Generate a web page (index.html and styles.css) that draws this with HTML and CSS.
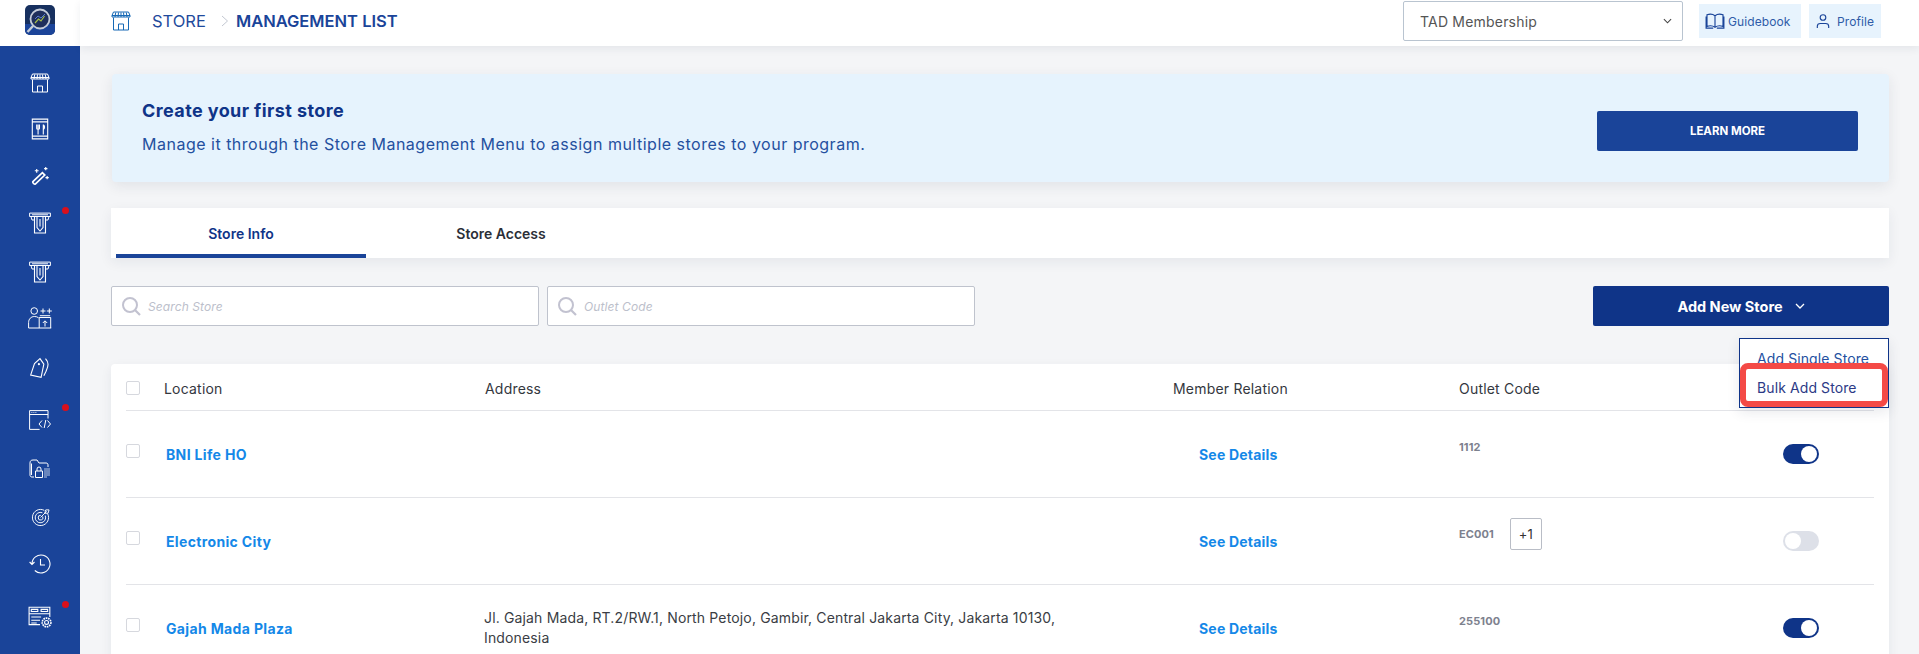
FILE: index.html
```html
<!DOCTYPE html>
<html lang="en">
<head>
<meta charset="utf-8">
<title>Store Management List</title>
<link rel="stylesheet" href="styles.css">
</head>
<body>
<svg class="defs" width="0" height="0" aria-hidden="true">
  <symbol id="i-store" viewBox="0 0 20 20"><path d="M2.500 1h15l1.500 3.500v1.500H1V4.500zM1 4.500h18M2.500 6.500V19h15V6.500M7.500 19v-6h5v6M7.500 1.500 7 6M12.500 1.500 13 6M10 1.500V6M4.700 1.500 4 6M15.300 1.500 16 6" fill="none" stroke="currentColor" stroke-width="1"/></symbol>
  <symbol id="i-menu" viewBox="0 0 20 20"><path d="M3 1h14v18H3zM3 3.500h14M3 16.500h14M7 6v3.500c0 1 2.500 1 2.500 0V6M8.250 6v9M13 6v9M13 6c1.500 1 1.500 3.500 0 4.500" fill="none" stroke="currentColor" stroke-width="1"/></symbol>
  <symbol id="i-wand" viewBox="0 0 20 20"><path d="M2 15.500 12 6l2.500 2.500L4.500 18c-.8.600-3.300-1.700-2.500-2.500z" fill="none" stroke="currentColor" stroke-width="1.800"/><path d="M6 2v4M4 4h4M15.500 0v3.500M13.800 1.700h3.500M17 9.500v3.500M15.200 11.200h3.500" stroke="currentColor" stroke-width="1.200" fill="none"/></symbol>
  <symbol id="i-atm" viewBox="0 0 22 21"><path d="M.6.600h20.800v3.400H.6zM2 4l1 3.500h2.500M20 4l-1 3.500h-2.500M3 2.300h16" fill="none" stroke="currentColor" stroke-width="1"/><path d="M5.500 4v16.500h11V4M8 4v11l3 3.500 3-3.500V4M11 6.500v7.500" fill="none" stroke="currentColor" stroke-width="1.100"/></symbol>
  <symbol id="i-user-add" viewBox="0 0 24 22"><circle cx="6.200" cy="4" r="3.300" fill="none" stroke="currentColor" stroke-width="1"/><path d="M.6 21v-5.500c0-3.500 2.500-6 5.800-6 1.700 0 3 .4 4.100 1.200M.6 21h22.600M11.200 21V10.500h11.500V21M11.800 8.700h10.400M17 19.500V14M14.800 16l2.200-2.200 2.200 2.200M12.500 4h5M15 1.500v5M18.800 4h5M21.300 1.500v5" fill="none" stroke="currentColor" stroke-width="1"/></symbol>
  <symbol id="i-tag" viewBox="0 0 20 20"><path d="M1.500 16.500 5 6l5-4.500 3.500 5-2.500 12zM15 1.500c3 3.500 3 6 .5 11.500L13.500 17" fill="none" stroke="currentColor" stroke-width="1"/><circle cx="9" cy="6.500" r="1" fill="currentColor"/></symbol>
  <symbol id="i-code" viewBox="0 0 22 20"><path d="M19 8.500V.600H.600v18.800h10M.6 4.500H19M2.500 2.500h.8M4.500 2.500h.8M6.500 2.500h.8" fill="none" stroke="currentColor" stroke-width="1"/><path d="M13 10.500 10 14l3 3.500M18.500 10.500 21.500 14l-3 3.500M16.800 10l-1.600 8" fill="none" stroke="currentColor" stroke-width="1"/></symbol>
  <symbol id="i-folder" viewBox="0 0 22 20"><path d="M5 18H3c-1.500 0-2-1-2-2V4c0-2 1-3 3-3h4l2 3h7c1.500 0 2 .8 2 2v2M2.500 4.500V16" fill="none" stroke="currentColor" stroke-width="1"/><path d="M6.500 12h7v6.500h-7zM8 12v-2a2 2 0 0 1 4 0v2" fill="none" stroke="currentColor" stroke-width="1"/><path d="M15 10h6M15 12h6M15 14h6M15 16h6M15 18h3" fill="none" stroke="currentColor" stroke-width="1" opacity=".7"/></symbol>
  <symbol id="i-target" viewBox="0 0 20 20"><path d="M17.500 6a8.500 8.500 0 1 1-3.500-3.500M15 8a5.500 5.500 0 1 1-3-3M12.300 9a2.500 2.500 0 1 1-2-1.300M10 10l6.500-6.500M15.500 2 14.500 5.500H18L19 2z" fill="none" stroke="currentColor" stroke-width="1"/></symbol>
  <symbol id="i-history" viewBox="0 0 22 20"><path d="M3 10a9 9 0 1 1 2.800 6.500M.6 8 3 10.500 5.500 8M11.500 5v6h4.500" fill="none" stroke="currentColor" stroke-width="1.100"/></symbol>
  <symbol id="i-abc" viewBox="0 0 22 20"><path d="M11 17H1V1h19v9M1 7h19M3 3h6v2H3zM12 3h6v2h-6zM3 10h9M3 13h8M3 15.500h5" fill="none" stroke="currentColor" stroke-width="1"/><circle cx="17" cy="15" r="4" fill="none" stroke="currentColor" stroke-width="1.500" stroke-dasharray="1.500 .7"/><circle cx="17" cy="15" r="1.800" fill="none" stroke="currentColor" stroke-width="1"/></symbol>
  <symbol id="i-search" viewBox="0 0 20 20"><circle cx="9" cy="9" r="7" fill="none" stroke="currentColor" stroke-width="2"/><path d="M14 14l5 5" stroke="currentColor" stroke-width="2.200" fill="none"/></symbol>
</svg>

<div class="app">
  <aside class="sidebar">
    <div class="logo-box">
      <svg class="logo" viewBox="0 0 30 30" aria-label="Logo">
        <rect width="30" height="30" rx="5" fill="#17305f"/>
        <path d="M0 19h30v6a5 5 0 0 1-5 5H5a5 5 0 0 1-5-5z" fill="#1b4499"/>
        <circle cx="15" cy="14" r="9.500" fill="#1f2f5c" stroke="#c5ccd8" stroke-width="1.800"/>
        <path d="M10 18l3.500-4 2.500 2 3.500-5" stroke="#a8c04a" stroke-width="1.200" fill="none"/>
        <path d="M10 14l3-3 3 2 4-4" stroke="#5b7fd0" stroke-width="1" fill="none"/>
        <path d="M8 21 2.500 27" stroke="#c5ccd8" stroke-width="2.400"/>
      </svg>
    </div>
    <nav class="side-nav">
      <a class="side-item"><svg class="side-icon s20"><use href="#i-store"/></svg></a>
      <a class="side-item"><svg class="side-icon"><use href="#i-menu"/></svg></a>
      <a class="side-item"><svg class="side-icon s19"><use href="#i-wand"/></svg></a>
      <a class="side-item has-dot"><svg class="side-icon"><use href="#i-atm"/></svg></a>
      <a class="side-item"><svg class="side-icon"><use href="#i-atm"/></svg></a>
      <a class="side-item"><svg class="side-icon s24"><use href="#i-user-add"/></svg></a>
      <a class="side-item"><svg class="side-icon"><use href="#i-tag"/></svg></a>
      <a class="side-item has-dot"><svg class="side-icon"><use href="#i-code"/></svg></a>
      <a class="side-item"><svg class="side-icon"><use href="#i-folder"/></svg></a>
      <a class="side-item"><svg class="side-icon s19"><use href="#i-target"/></svg></a>
      <a class="side-item"><svg class="side-icon"><use href="#i-history"/></svg></a>
      <a class="side-item has-dot"><svg class="side-icon s24"><use href="#i-abc"/></svg></a>
    </nav>
  </aside>

  <div class="main">
    <header class="topbar">
      <svg class="crumb-icon"><use href="#i-store"/></svg>
      <span class="crumb">STORE</span>
      <svg class="crumb-sep" viewBox="0 0 8 12"><path d="M1 1l5.500 5L1 11" fill="none" stroke="currentColor" stroke-width="1"/></svg>
      <span class="crumb-current">MANAGEMENT LIST</span>
      <div class="top-actions">
        <div class="select-box">
          <span>TAD Membership</span>
          <svg class="select-caret" viewBox="0 0 10 6"><path d="M1 1l4 4 4-4" fill="none" stroke="currentColor" stroke-width="1.200"/></svg>
        </div>
        <a class="top-link guide">
          <svg class="book" viewBox="0 0 22 18"><path d="M11 3C9 1.500 5 1 2 2v13c3-1 7-.5 9 1 2-1.500 6-2 9-1V2c-3-1-7-.5-9 1zM11 3v13M1 4v13h8M21 4v13h-8" fill="none" stroke="currentColor" stroke-width="1.300"/></svg>
          Guidebook
        </a>
        <a class="top-link profile">
          <svg class="person" viewBox="0 0 16 18"><circle cx="8" cy="5" r="3.200" fill="none" stroke="currentColor" stroke-width="1.300"/><path d="M1.500 17v-2c0-2 1.500-3.200 3.500-3.200h6c2 0 3.500 1.200 3.500 3.200v2" fill="none" stroke="currentColor" stroke-width="1.300"/></svg>
          Profile
        </a>
      </div>
    </header>

    <main class="content">
      <section class="banner">
        <div class="banner-copy">
          <h2 class="banner-title">Create your first store</h2>
          <p class="banner-text">Manage it through the Store Management Menu to assign multiple stores to your program.</p>
        </div>
        <a class="learn-btn">LEARN MORE</a>
      </section>

      <div class="tabs">
        <a class="tab active">Store Info</a>
        <a class="tab">Store Access</a>
      </div>

      <div class="tools">
        <label class="search"><svg class="search-icon"><use href="#i-search"/></svg><span>Search Store</span></label>
        <label class="search"><svg class="search-icon"><use href="#i-search"/></svg><span>Outlet Code</span></label>
        <a class="add-btn">Add New Store
          <svg class="add-caret" viewBox="0 0 10 6"><path d="M1 1l4 4 4-4" fill="none" stroke="currentColor" stroke-width="1.300"/></svg>
        </a>
        <div class="add-menu">
          <div class="menu-item">Add Single Store</div>
          <div class="menu-item marked">Bulk Add Store</div>
        </div>
      </div>

      <section class="table">
        <div class="row head">
          <span class="check"></span>
          <span>Location</span>
          <span>Address</span>
          <span>Member Relation</span>
          <span>Outlet Code</span>
          <span></span>
        </div>
        <div class="row">
          <span class="check up"></span>
          <a class="store-name">BNI Life HO</a>
          <span></span>
          <a class="details">See Details</a>
          <div class="code"><b>1112</b></div>
          <span class="toggle on"></span>
        </div>
        <div class="row">
          <span class="check up"></span>
          <a class="store-name">Electronic City</a>
          <span></span>
          <a class="details">See Details</a>
          <div class="code"><b>EC001</b><span class="more">+1</span></div>
          <span class="toggle"></span>
        </div>
        <div class="row">
          <span class="check up"></span>
          <a class="store-name">Gajah Mada Plaza</a>
          <span class="address">Jl. Gajah Mada, RT.2/RW.1, North Petojo, Gambir, Central Jakarta City, Jakarta 10130, Indonesia</span>
          <a class="details">See Details</a>
          <div class="code"><b>255100</b></div>
          <span class="toggle on"></span>
        </div>
      </section>
    </main>
  </div>
</div>
</body>
</html>
```

FILE: styles.css
```css
*, *::before, *::after { box-sizing: border-box; }
html, body { margin: 0; height: 100%; overflow: hidden; }
body { font-family: Inter, "Liberation Sans", sans-serif; background: #f4f5f7; color: #2b2f38; }
a { text-decoration: none; color: inherit; }
.defs { position: absolute; }

.app { display: flex; height: 654px; overflow: hidden; }

.sidebar { width: 80px; flex: none; background: #1a4499; }
.logo-box { height: 46px; background: #fff; display: flex; justify-content: center; padding-top: 5px; }
.logo { width: 30px; height: 30px; }
.side-nav { display: flex; flex-direction: column; padding-top: 14px; }
.side-item { position: relative; height: 46px; flex: none; display: flex; align-items: center; justify-content: center; color: #fff; }
.side-item:nth-child(3), .side-item:nth-child(4) { margin-top: 1px; }
.side-item:nth-child(5) { margin-top: 3px; }
.side-item:nth-child(7) { margin-top: 4px; }
.side-item:nth-child(8) { margin-top: 6px; }
.side-item:nth-child(9) { margin-top: 3px; }
.side-item:nth-child(10) { margin-top: 2px; }
.side-item:nth-child(11) { margin-top: 1px; }
.side-item:nth-child(12) { margin-top: 7px; }
.side-icon { width: 22px; height: 22px; }
.s19 { width: 19px; height: 19px; }
.s20 { width: 20px; height: 20px; }
.s24 { width: 24px; height: 24px; }
.has-dot::after { content: ""; position: absolute; left: 62px; top: 7px; width: 7px; height: 7px; border-radius: 50%; background: #d8101c; }

.main { flex: 1; min-width: 0; display: flex; flex-direction: column; }

.topbar { height: 46px; flex: none; background: #fff; display: flex; align-items: center; padding: 0 0 4px 31px; box-shadow: 0 3px 8px rgba(30, 40, 70, .07); position: relative; z-index: 2; }
.crumb-icon { width: 20px; height: 20px; color: #1669b5; margin-right: 21px; }
.crumb { font-size: 16.500px; color: #1f4a9c; }
.crumb-sep { width: 8px; height: 12px; color: #c3c8d2; margin: 0 7px 0 15px; }
.crumb-current { font-size: 16.500px; font-weight: 600; color: #1a4499; }
.top-actions { margin-left: auto; display: flex; align-items: center; margin-right: 38px; }
.select-box { width: 280px; height: 40px; margin-right: 16px; background: #fff; border: 1px solid #b9c4d0; border-radius: 2px; display: flex; align-items: center; justify-content: space-between; padding: 0 10px 0 16px; font-size: 14px; letter-spacing: .2px; color: #555; }
.select-caret { width: 9px; height: 6px; color: #444; }
.top-link { height: 34px; display: flex; align-items: center; background: #e7f3fd; color: #2f5ca8; font-size: 12px; letter-spacing: .1px; }
.guide { width: 102px; padding-left: 6px; gap: 3px; margin-right: 8px; }
.profile { width: 72px; padding-left: 7px; gap: 7px; }
.book { width: 20px; height: 16px; color: #1a4499; }
.person { width: 14px; height: 16px; color: #1a4499; }

.content { padding: 28px 30px 0 31px; }

.banner { height: 108px; margin-left: 1px; background: #e6f3fd; border-radius: 4px; box-shadow: 0 4px 14px rgba(30, 40, 70, .09); display: flex; align-items: center; justify-content: space-between; padding: 0 31px 0 30px; }
.banner-copy { padding-bottom: 2px; }
.banner-title { margin: 0 0 9px; font-size: 18px; line-height: 24px; font-weight: 700; letter-spacing: .4px; color: #0f3488; }
.banner-text { margin: 0; font-size: 16px; line-height: 24px; letter-spacing: .5px; color: #24509f; }
.learn-btn { width: 261px; height: 40px; margin-top: 6px; background: #1a4499; border-radius: 2px; color: #fff; font-size: 11.500px; font-weight: 700; display: flex; align-items: center; justify-content: center; }

.tabs { height: 50px; margin-top: 26px; background: #fff; box-shadow: 0 4px 12px rgba(30, 40, 70, .07); display: flex; padding-left: 5px; }
.tab { width: 250px; height: 50px; display: flex; align-items: center; justify-content: center; font-size: 14px; font-weight: 600; color: #2b2f38; padding-top: 4px; border-bottom: 4px solid transparent; }
.tab.active { color: #0f3488; border-bottom-color: #1a4499; }
.tab + .tab { width: 270px; }

.tools { position: relative; display: flex; gap: 8px; margin-top: 28px; height: 40px; z-index: 3; }
.search { width: 428px; height: 40px; background: #fff; border: 1px solid #bfc3cd; border-radius: 2px; display: flex; align-items: center; padding-left: 9px; gap: 7px; font-size: 12px; letter-spacing: .1px; font-style: italic; color: #bcc0cb; }
.search-icon { width: 20px; height: 20px; color: #c2c2d0; }
.add-btn { margin-left: auto; width: 296px; height: 40px; background: #0f3488; border-radius: 2px; color: #fff; font-size: 14.500px; font-weight: 700; display: flex; align-items: center; justify-content: center; gap: 12px; }
.add-caret { width: 10px; height: 6px; }
.add-menu { position: absolute; right: 0; top: 52px; width: 150px; height: 70px; background: #fff; border: 1px solid #0f3488; padding-top: 5px; box-shadow: 0 4px 12px rgba(30, 40, 70, .1); }
.menu-item { font-size: 14px; line-height: 29px; letter-spacing: .1px; padding-left: 17px; color: #24509f; }
.marked { color: #2c3a86; position: relative; height: 29px; }
.marked::after { content: ""; position: absolute; left: 0; top: -10px; width: 148px; height: 44px; border: 6px solid #f44a46; border-radius: 8px; }

.table { margin-top: 38px; background: #fff; border-radius: 4px; padding: 0 15px; box-shadow: 0 4px 12px rgba(30, 40, 70, .07); }
.row { display: grid; grid-template-columns: 38px 321px 688px 286px 324px 1fr; align-items: center; height: 87px; border-bottom: 1px solid #e3e4e8; font-size: 14px; letter-spacing: .2px; }
.row.head { height: 47px; padding-top: 2px; color: #34373e; }
.check { width: 14px; height: 14px; border: 1px solid #d6d8de; border-radius: 2px; background: #fff; }
.check.up { margin-top: -6px; }
.store-name { margin-left: 2px; font-size: 14px; font-weight: 700; letter-spacing: .35px; color: #1488e8; }
.details { margin-left: 26px; font-size: 14px; font-weight: 700; letter-spacing: .2px; color: #1488e8; }
.address { font-size: 14px; line-height: 20px; letter-spacing: .15px; color: #3a3d44; width: 595px; margin-left: -1px; }
.code { display: flex; align-items: center; gap: 16px; height: 32px; margin-top: -15px; font-size: 11px; letter-spacing: .1px; color: #7d818e; }
.more { width: 32px; height: 32px; border: 1px solid #b9bdc6; border-radius: 2px; display: flex; align-items: center; justify-content: center; font-size: 13px; color: #333; }
.toggle { position: relative; width: 36px; height: 20px; border-radius: 10px; background: #dde0e8; }
.toggle::after { content: ""; position: absolute; top: 2px; left: 2px; width: 16px; height: 16px; border-radius: 50%; background: #fff; }
.toggle.on { background: #0f3488; }
.toggle.on::after { left: 18px; }
```
